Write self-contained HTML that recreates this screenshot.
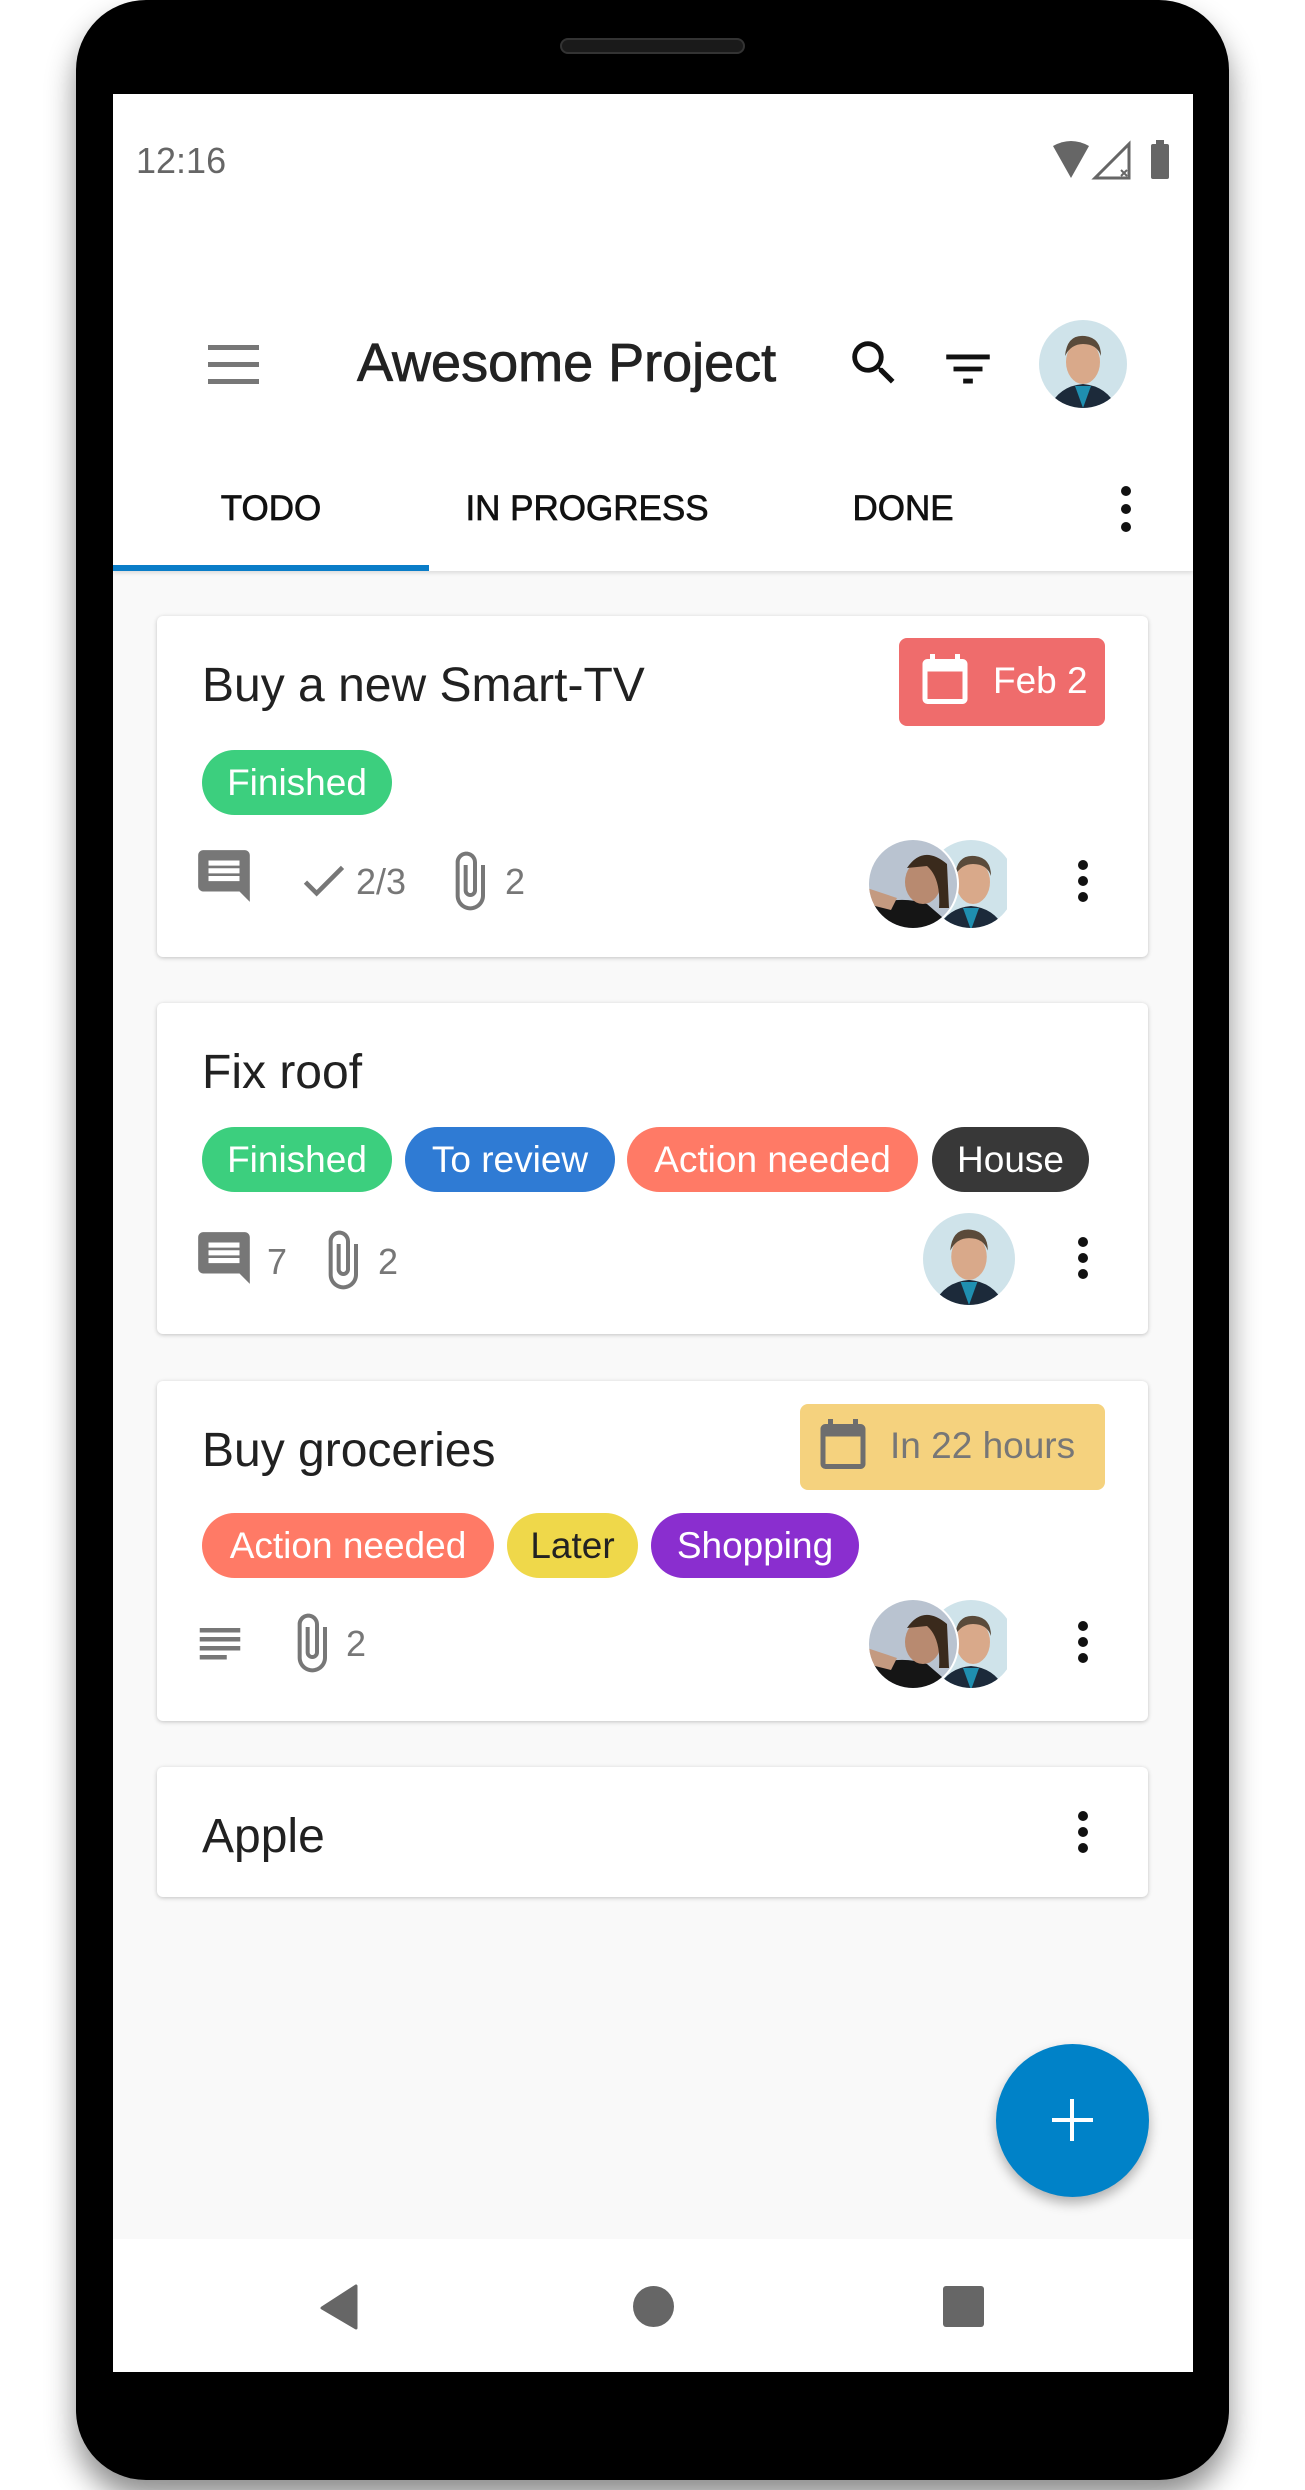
<!DOCTYPE html>
<html><head><meta charset="utf-8">
<style>
*{margin:0;padding:0;box-sizing:border-box}
body{width:1305px;height:2490px;background:#fff;font-family:"Liberation Sans",Roboto,sans-serif;position:relative;overflow:hidden}
.abs{position:absolute}
.phone{left:76px;top:0;width:1153px;height:2480px;background:#000;border-radius:70px;box-shadow:0 18px 30px rgba(0,0,0,.45)}
.screen{left:113px;top:94px;width:1080px;height:2278px;background:#f9f9f9;overflow:hidden}
.card{position:absolute;left:44px;width:991px;background:#fff;border-radius:6px;box-shadow:0 1px 4px rgba(0,0,0,.22)}
.title{position:absolute;left:45px;font-size:48px;color:#212121}
.tag{position:absolute;height:65px;border-radius:33px;color:#fff;font-size:37px;line-height:65px;text-align:center}
.meta{position:absolute;font-size:36px;color:#777}
.kebab{position:absolute;width:10px}
.kebab i{display:block;width:10px;height:10px;border-radius:50%;background:#111;margin-bottom:6px}
.tab{top:395px;width:316px;text-align:center;font-size:35px;color:#111;-webkit-text-stroke:0.7px #111}
</style></head><body>
<div class="abs phone"></div>
<div class="abs" style="left:560px;top:38px;width:185px;height:16px;border-radius:8px;background:#1a1a1a;border:2px solid #333"></div>
<div class="abs screen">
  <div class="abs" style="left:0;top:0;width:1080px;height:477px;background:#fff;box-shadow:0 2px 4px rgba(0,0,0,.12)"></div>
  <div class="abs" style="left:23px;top:46px;font-size:36px;color:#666">12:16</div>
  <svg class="abs" style="left:938px;top:46px" width="135" height="42" viewBox="0 0 135 42">
    <path d="M2 6 Q20 -4 38 6 L20 38Z" fill="#666"/>
    <path d="M78 4 L78 38 L44 38Z" fill="none" stroke="#666" stroke-width="3"/>
    <path d="M70 30 l6 6 M76 30 l-6 6" stroke="#666" stroke-width="2"/>
    <rect x="100" y="4" width="18" height="35" rx="2" fill="#666"/><rect x="105" y="0" width="8" height="5" fill="#666"/>
  </svg>
  <div class="abs" style="left:95px;top:251px;width:51px;height:5px;background:#777"></div>
  <div class="abs" style="left:95px;top:268px;width:51px;height:5px;background:#777"></div>
  <div class="abs" style="left:95px;top:285px;width:51px;height:5px;background:#777"></div>
  <div class="abs" style="left:244px;top:238px;font-size:54px;color:#222;-webkit-text-stroke:0.8px #222">Awesome Project</div>
  <svg class="abs" style="left:732px;top:240px" width="58" height="58" viewBox="0 0 24 24"><path d="M15.5 14h-.79l-.28-.27A6.47 6.47 0 0 0 16 9.5 6.5 6.5 0 1 0 9.5 16c1.61 0 3.09-.59 4.23-1.57l.27.28v.79l5 4.99L20.49 19l-4.99-5zm-6 0C7.01 14 5 11.99 5 9.5S7.01 5 9.5 5 14 7.01 14 9.5 11.99 14 9.5 14z" fill="#111"/></svg>
  <svg class="abs" style="left:826px;top:246px" width="58" height="58" viewBox="0 0 24 24"><path d="M10 18h4v-2h-4v2zM3 6v2h18V6H3zm3 7h12v-2H6v2z" fill="#111"/></svg>
  <svg class="abs" style="left:926px;top:226px" width="88" height="88" viewBox="0 0 88 88">
    <defs><clipPath id="ca"><circle cx="44" cy="44" r="44"/></clipPath></defs>
    <g clip-path="url(#ca)"><rect width="88" height="88" fill="#cfe3ea"/><path d="M10 88 Q20 66 44 64 Q68 66 78 88Z" fill="#1c2a3a"/><path d="M36 66 L44 88 L52 66Z" fill="#1f8fb0"/><ellipse cx="44" cy="42" rx="17" ry="22" fill="#d9a98a"/><path d="M26 36 Q28 14 46 16 Q62 18 62 36 Q58 24 44 24 Q32 24 26 36Z" fill="#5a4a3a"/></g></svg>
  <div class="abs tab" style="left:0">TODO</div>
  <div class="abs tab" style="left:316px">IN PROGRESS</div>
  <div class="abs tab" style="left:632px">DONE</div>
  <div class="kebab" style="left:1008px;top:392px"><i style="margin-bottom:8px"></i><i style="margin-bottom:8px"></i><i></i></div>
  <div class="abs" style="left:0;top:471px;width:316px;height:6px;background:#0a7dc8"></div>

  <div class="card" style="top:522px;height:341px">
    <div class="title" style="top:42px">Buy a new Smart-TV</div>
    <div class="abs" style="left:742px;top:22px;width:206px;height:88px;border-radius:8px;background:#ef6c6c"></div>
    <svg class="abs" style="left:758px;top:30px" width="60" height="66" viewBox="0 0 24 24"><path d="M19 4h-1V2h-2v2H8V2H6v2H5c-1.11 0-2 .9-2 2v14a2 2 0 0 0 2 2h14c1.1 0 2-.9 2-2V6c0-1.1-.9-2-2-2zm0 16H5V9h14v11z" fill="#fff"/></svg>
    <div class="abs" style="left:836px;top:44px;font-size:37px;color:#fff">Feb 2</div>
    <div class="tag" style="left:45px;top:134px;width:190px;background:#3ccf7e">Finished</div>
    <svg class="abs" style="left:36px;top:229px" width="62" height="62" viewBox="0 0 24 24"><path d="M21.99 4c0-1.1-.89-2-1.99-2H4c-1.1 0-2 .9-2 2v12c0 1.1.9 2 2 2h14l4 4-.01-18zM18 14H6v-2h12v2zm0-3H6V9h12v2zm0-3H6V6h12v2z" fill="#777"/></svg>
    <svg class="abs" style="left:139px;top:237px" width="55" height="55" viewBox="0 0 24 24"><path d="M9 16.17L4.83 12l-1.42 1.41L9 19 21 7l-1.41-1.41z" fill="#777"/></svg>
    <div class="meta" style="left:199px;top:245px">2/3</div>
    <svg class="abs" style="left:280px;top:233px" width="64" height="64" viewBox="0 0 24 24"><path d="M16.5 6v11.5c0 2.21-1.79 4-4 4s-4-1.79-4-4V5a2.5 2.5 0 0 1 5 0v10.5c0 .55-.45 1-1 1s-1-.45-1-1V6H10v9.5a2.5 2.5 0 0 0 5 0V5c0-2.21-1.79-4-4-4S7 2.79 7 5v12.5c0 3.04 2.46 5.5 5.5 5.5s5.5-2.46 5.5-5.5V6h-1.5z" fill="#777"/></svg>
    <div class="meta" style="left:348px;top:245px">2</div>
    <svg class="abs" style="left:710px;top:222px" width="140" height="92" viewBox="0 0 140 92">
      <defs><clipPath id="c1"><circle cx="104" cy="46" r="44"/></clipPath><clipPath id="c2"><circle cx="46" cy="46" r="44"/></clipPath></defs>
      <g clip-path="url(#c1)"><rect x="60" width="88" height="92" fill="#cfe3ea"/><path d="M70 92 Q80 70 104 68 Q128 70 138 92Z" fill="#1c2a3a"/><path d="M96 70 L104 92 L112 70Z" fill="#1f8fb0"/><ellipse cx="106" cy="44" rx="17" ry="22" fill="#d9a98a"/><path d="M88 38 Q90 16 108 18 Q124 20 124 38 Q120 26 106 26 Q94 26 88 38Z" fill="#5a4a3a"/></g>
      <circle cx="46" cy="46" r="46" fill="#fff"/>
      <g clip-path="url(#c2)"><rect width="92" height="92" fill="#b9c3d0"/><path d="M0 92 L0 70 Q30 56 60 66 L90 92Z" fill="#151515"/><ellipse cx="56" cy="44" rx="18" ry="22" fill="#b88a70"/><path d="M40 30 Q56 6 80 26 L82 70 L72 70 Q74 40 60 28Z" fill="#3a2a1c"/><path d="M0 50 L30 60 L24 72 L0 66Z" fill="#c49a80"/></g>
    </svg>
    <div class="kebab" style="left:921px;top:244px"><i></i><i></i><i></i></div>
  </div>

  <div class="card" style="top:909px;height:331px">
    <div class="title" style="top:42px">Fix roof</div>
    <div class="tag" style="left:45px;top:124px;width:190px;background:#3ccf7e">Finished</div>
    <div class="tag" style="left:248px;top:124px;width:210px;background:#2f7bd4">To review</div>
    <div class="tag" style="left:470px;top:124px;width:291px;background:#ff7a66">Action needed</div>
    <div class="tag" style="left:775px;top:124px;width:157px;background:#383838">House</div>
    <svg class="abs" style="left:36px;top:224px" width="62" height="62" viewBox="0 0 24 24"><path d="M21.99 4c0-1.1-.89-2-1.99-2H4c-1.1 0-2 .9-2 2v12c0 1.1.9 2 2 2h14l4 4-.01-18zM18 14H6v-2h12v2zm0-3H6V9h12v2zm0-3H6V6h12v2z" fill="#777"/></svg>
    <div class="meta" style="left:110px;top:238px">7</div>
    <svg class="abs" style="left:153px;top:225px" width="64" height="64" viewBox="0 0 24 24"><path d="M16.5 6v11.5c0 2.21-1.79 4-4 4s-4-1.79-4-4V5a2.5 2.5 0 0 1 5 0v10.5c0 .55-.45 1-1 1s-1-.45-1-1V6H10v9.5a2.5 2.5 0 0 0 5 0V5c0-2.21-1.79-4-4-4S7 2.79 7 5v12.5c0 3.04 2.46 5.5 5.5 5.5s5.5-2.46 5.5-5.5V6h-1.5z" fill="#777"/></svg>
    <div class="meta" style="left:221px;top:238px">2</div>
    <svg class="abs" style="left:766px;top:210px" width="92" height="92" viewBox="0 0 88 88">
      <defs><clipPath id="c3"><circle cx="44" cy="44" r="44"/></clipPath></defs>
      <g clip-path="url(#c3)"><rect width="88" height="88" fill="#cfe3ea"/><path d="M10 88 Q20 66 44 64 Q68 66 78 88Z" fill="#1c2a3a"/><path d="M36 66 L44 88 L52 66Z" fill="#1f8fb0"/><ellipse cx="44" cy="42" rx="17" ry="22" fill="#d9a98a"/><path d="M26 36 Q28 14 46 16 Q62 18 62 36 Q58 24 44 24 Q32 24 26 36Z" fill="#5a4a3a"/></g></svg>
    <div class="kebab" style="left:921px;top:234px"><i></i><i></i><i></i></div>
  </div>

  <div class="card" style="top:1287px;height:340px">
    <div class="title" style="top:42px">Buy groceries</div>
    <div class="abs" style="left:643px;top:23px;width:305px;height:86px;border-radius:8px;background:#f5d27e"></div>
    <svg class="abs" style="left:656px;top:30px" width="60" height="66" viewBox="0 0 24 24"><path d="M19 4h-1V2h-2v2H8V2H6v2H5c-1.11 0-2 .9-2 2v14a2 2 0 0 0 2 2h14c1.1 0 2-.9 2-2V6c0-1.1-.9-2-2-2zm0 16H5V9h14v11z" fill="#6e6e6e"/></svg>
    <div class="abs" style="left:733px;top:44px;font-size:37px;color:#777">In 22 hours</div>
    <div class="tag" style="left:45px;top:132px;width:292px;background:#ff7a66">Action needed</div>
    <div class="tag" style="left:350px;top:132px;width:131px;background:#efd84a;color:#222">Later</div>
    <div class="tag" style="left:494px;top:132px;width:208px;background:#8a2ecf">Shopping</div>
    <svg class="abs" style="left:36px;top:238px" width="54" height="54" viewBox="0 0 24 24"><path d="M3 4h18v2H3zM3 8h18v2H3zM3 12h18v2H3zM3 16h12v2H3z" fill="#777"/></svg>
    <svg class="abs" style="left:122px;top:230px" width="64" height="64" viewBox="0 0 24 24"><path d="M16.5 6v11.5c0 2.21-1.79 4-4 4s-4-1.79-4-4V5a2.5 2.5 0 0 1 5 0v10.5c0 .55-.45 1-1 1s-1-.45-1-1V6H10v9.5a2.5 2.5 0 0 0 5 0V5c0-2.21-1.79-4-4-4S7 2.79 7 5v12.5c0 3.04 2.46 5.5 5.5 5.5s5.5-2.46 5.5-5.5V6h-1.5z" fill="#777"/></svg>
    <div class="meta" style="left:189px;top:242px">2</div>
    <svg class="abs" style="left:710px;top:217px" width="140" height="92" viewBox="0 0 140 92">
      <defs><clipPath id="c4"><circle cx="104" cy="46" r="44"/></clipPath><clipPath id="c5"><circle cx="46" cy="46" r="44"/></clipPath></defs>
      <g clip-path="url(#c4)"><rect x="60" width="88" height="92" fill="#cfe3ea"/><path d="M70 92 Q80 70 104 68 Q128 70 138 92Z" fill="#1c2a3a"/><path d="M96 70 L104 92 L112 70Z" fill="#1f8fb0"/><ellipse cx="106" cy="44" rx="17" ry="22" fill="#d9a98a"/><path d="M88 38 Q90 16 108 18 Q124 20 124 38 Q120 26 106 26 Q94 26 88 38Z" fill="#5a4a3a"/></g>
      <circle cx="46" cy="46" r="46" fill="#fff"/>
      <g clip-path="url(#c5)"><rect width="92" height="92" fill="#b9c3d0"/><path d="M0 92 L0 70 Q30 56 60 66 L90 92Z" fill="#151515"/><ellipse cx="56" cy="44" rx="18" ry="22" fill="#b88a70"/><path d="M40 30 Q56 6 80 26 L82 70 L72 70 Q74 40 60 28Z" fill="#3a2a1c"/><path d="M0 50 L30 60 L24 72 L0 66Z" fill="#c49a80"/></g>
    </svg>
    <div class="kebab" style="left:921px;top:240px"><i></i><i></i><i></i></div>
  </div>

  <div class="card" style="top:1673px;height:130px">
    <div class="title" style="top:42px">Apple</div>
    <div class="kebab" style="left:921px;top:44px"><i></i><i></i><i></i></div>
  </div>

  <div class="abs" style="left:883px;top:1950px;width:153px;height:153px;border-radius:50%;background:#0082c8;box-shadow:0 6px 12px rgba(0,0,0,.3)"></div>
  <div class="abs" style="left:939px;top:2024px;width:41px;height:4px;background:#fff"></div>
  <div class="abs" style="left:957px;top:2005px;width:4px;height:42px;background:#fff"></div>

  <div class="abs" style="left:0;top:2145px;width:1080px;height:133px;background:#fff"></div>
  <svg class="abs" style="left:205px;top:2190px" width="42" height="46" viewBox="0 0 42 46"><path d="M38 2 L38 44 L4 24Z" fill="#666" stroke="#666" stroke-width="3" stroke-linejoin="round"/></svg>
  <div class="abs" style="left:520px;top:2192px;width:41px;height:41px;border-radius:50%;background:#666"></div>
  <div class="abs" style="left:830px;top:2192px;width:41px;height:41px;border-radius:3px;background:#666"></div>
</div>
</body></html>
